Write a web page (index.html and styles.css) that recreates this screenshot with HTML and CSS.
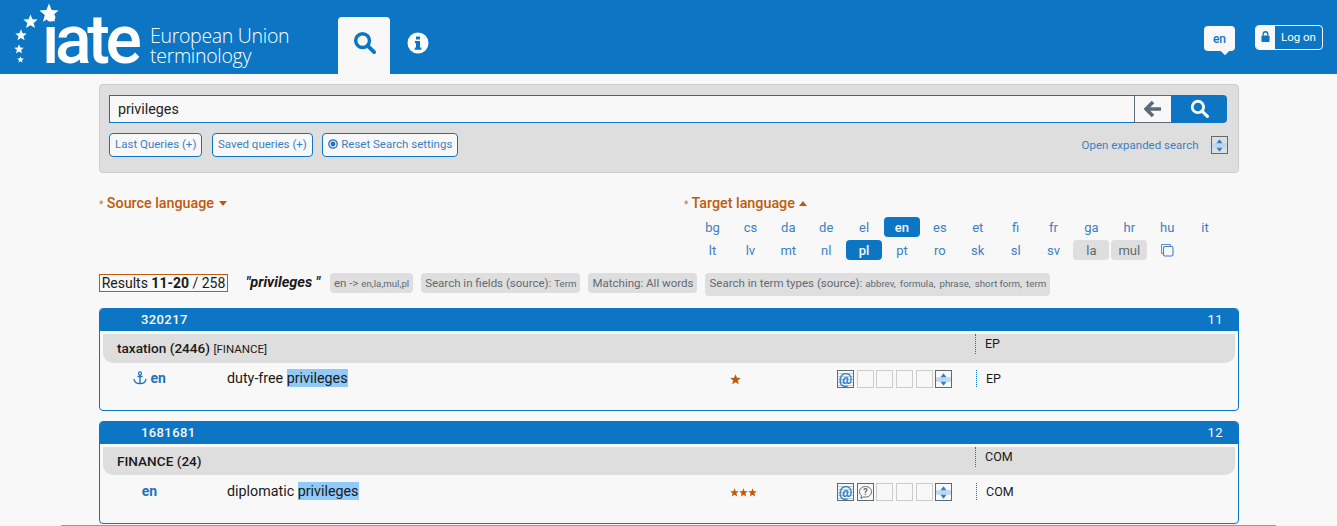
FILE: index.html
```html
<!DOCTYPE html>
<html lang="en">
<head>
    <meta charset="UTF-8">
    <meta name="viewport" content="width=device-width, initial-scale=1.0">
    <title>IATE - European Union terminology</title>
    <link rel="stylesheet" href="styles.css">
</head>
<body>

<svg class="sprites" width="0" height="0">
    <symbol id="i-search" viewBox="0 0 24 24">
        <circle cx="10" cy="10" r="7.2" fill="none" stroke="currentColor" stroke-width="3.6"/>
        <path d="M15.5 15.5 L22 22" fill="none" stroke="currentColor" stroke-width="4" stroke-linecap="round"/>
    </symbol>
    <symbol id="i-star" viewBox="0 0 20 20">
        <path d="M10 0.5 L12.6 7 L19.6 7.4 L14.2 11.9 L16 18.8 L10 15 L4 18.8 L5.8 11.9 L0.4 7.4 L7.4 7 Z" fill="currentColor"/>
    </symbol>
    <symbol id="i-updown" viewBox="0 0 17 17">
        <rect x="0" y="6" width="17" height="5" fill="#bcd7ee"/>
        <path d="M8.5 1.5 L12 6 L5 6 Z M8.5 15.5 L5 11 L12 11 Z" fill="#2a84d2"/>
    </symbol>
</svg>

<header class="topbar">
    <a class="logo" href="#">
        <svg class="logo-stars" width="46" height="66" viewBox="0 0 46 66">
            <use href="#i-star" x="25" y="3" width="20" height="20" color="#fff"/>
            <use href="#i-star" x="9" y="14" width="15" height="15" color="#fff"/>
            <use href="#i-star" x="1" y="29" width="12" height="12" color="#fff"/>
            <use href="#i-star" x="0" y="44" width="10" height="10" color="#fff"/>
            <use href="#i-star" x="3" y="56" width="7" height="7" color="#fff"/>
        </svg>
        <span class="logo-mark">iate</span>
        <span class="logo-text">
            <span class="logo-line">European Union</span>
            <span class="logo-line">terminology</span>
        </span>
    </a>
    <nav class="tabs">
        <a class="tab tab-active" href="#"><svg width="23" height="23"><use href="#i-search"/></svg></a>
        <a class="tab tab-info" href="#">
            <svg width="22" height="22" viewBox="0 0 22 22">
                <circle cx="11" cy="11" r="10.5" fill="#fff"/>
                <path d="M9 4.5h4v3h-4z M8 9h5v6.5h1.400v2.200H7.700v-2.200H9v-4.300H8z" fill="#0c76c5"/>
            </svg>
        </a>
    </nav>
    <div class="top-right">
        <button class="lang-bubble">en</button>
        <button class="login">
            <span class="login-icon">
                <svg width="9" height="11" viewBox="0 0 10 12">
                    <path d="M2.500 5V3.200a2.500 2.500 0 0 1 5 0V5" fill="none" stroke="#0c76c5" stroke-width="1.500"/>
                    <rect x="0.500" y="5" width="9" height="7" rx="1" fill="#0c76c5"/>
                </svg>
            </span>
            <span class="login-text">Log on</span>
        </button>
    </div>
</header>

<main class="page">
    <section class="search-panel">
        <div class="search-row">
            <input class="search-input" type="text" value="privileges">
            <button class="search-back">
                <svg width="18" height="16" viewBox="0 0 18 16">
                    <path d="M9 1 L2 8 L9 15 M3 8 H17" fill="none" stroke="#5c6b75" stroke-width="3.600"/>
                </svg>
            </button>
            <button class="search-go"><svg width="19" height="19"><use href="#i-search"/></svg></button>
        </div>
        <div class="search-tools">
            <button class="tool-btn">Last Queries (+)</button>
            <button class="tool-btn">Saved queries (+)</button>
            <button class="tool-btn">
                <svg width="10" height="10" viewBox="0 0 10 10">
                    <circle cx="5" cy="5" r="4.200" fill="none" stroke="#1f74bd" stroke-width="1.300"/>
                    <circle cx="5" cy="5" r="2.400" fill="#1f74bd"/>
                </svg>
                Reset Search settings
            </button>
            <a class="expand-link" href="#">Open expanded search</a>
            <span class="icon-box icon-box-on expand-box"><svg width="15" height="15"><use href="#i-updown"/></svg></span>
        </div>
    </section>

    <section class="languages">
        <div class="lang-col">
            <h3 class="lang-title"><span class="req">*</span> Source language <span class="caret caret-down"></span></h3>
        </div>
        <div class="lang-col">
            <h3 class="lang-title"><span class="req">*</span> Target language <span class="caret caret-up"></span></h3>
            <div class="lang-grid">
                <a>bg</a><a>cs</a><a>da</a><a>de</a><a>el</a><a class="on">en</a><a>es</a><a>et</a><a>fi</a><a>fr</a><a>ga</a><a>hr</a><a>hu</a><a>it</a>
                <a>lt</a><a>lv</a><a>mt</a><a>nl</a><a class="on">pl</a><a>pt</a><a>ro</a><a>sk</a><a>sl</a><a>sv</a><a class="off">la</a><a class="off">mul</a>
                <a class="copy">
                    <svg width="14" height="14" viewBox="0 0 14 14">
                        <path d="M3 10.500H1.500V1.500H10.500V3" fill="none" stroke="#5a8fca" stroke-width="1"/>
                        <rect x="3.500" y="3.500" width="9.500" height="9.500" rx="1.500" fill="none" stroke="#3f80c8" stroke-width="1.100"/>
                    </svg>
                </a>
            </div>
        </div>
    </section>

    <section class="summary">
        <div class="results-count">Results <b>11-20</b> / 258</div>
        <div class="query">"privileges "</div>
        <span class="chip">en -&gt; <small>en,la,mul,pl</small></span>
        <span class="chip">Search in fields (source): <small>Term</small></span>
        <span class="chip">Matching: All words</span>
        <span class="chip chip-tall">Search in term types (source): <small>abbrev, &nbsp;formula, &nbsp;phrase, &nbsp;short form, &nbsp;term</small></span>
    </section>

    <article class="card">
        <div class="card-head"><span>320217</span><span class="card-num">11</span></div>
        <div class="band">
            <div class="domain"><b>taxation (2446)</b> <small>[FINANCE]</small></div>
            <div class="src src-band">EP</div>
        </div>
        <div class="term-row">
            <div class="term-lang">
                <svg width="14" height="14" viewBox="0 0 14 14">
                    <circle cx="7" cy="2.400" r="1.500" fill="none" stroke="#1f74bd" stroke-width="1.200"/>
                    <path d="M7 4v9 M4.500 5.500h5 M1 8c.3 3 3 4.600 6 4.600s5.700-1.600 6-4.600" fill="none" stroke="#1f74bd" stroke-width="1.400"/>
                </svg>
                en
            </div>
            <div class="term-text">duty-free <mark>privileges</mark></div>
            <div class="stars"><svg width="11" height="11"><use href="#i-star"/></svg></div>
            <div class="icons">
                <span class="icon-box icon-box-on at">@</span>
                <span class="icon-box"></span>
                <span class="icon-box"></span>
                <span class="icon-box"></span>
                <span class="icon-box"></span>
                <span class="icon-box icon-box-on"><svg width="15" height="15"><use href="#i-updown"/></svg></span>
            </div>
            <div class="src src-row">EP</div>
        </div>
    </article>

    <article class="card">
        <div class="card-head"><span>1681681</span><span class="card-num">12</span></div>
        <div class="band band-short">
            <div class="domain"><b>FINANCE (24)</b></div>
            <div class="src src-band">COM</div>
        </div>
        <div class="term-row">
            <div class="term-lang">en</div>
            <div class="term-text">diplomatic <mark>privileges</mark></div>
            <div class="stars">
                <svg width="9" height="11"><use href="#i-star"/></svg><svg width="9" height="11"><use href="#i-star"/></svg><svg width="9" height="11"><use href="#i-star"/></svg>
            </div>
            <div class="icons">
                <span class="icon-box icon-box-on at">@</span>
                <span class="icon-box icon-box-on">
                    <svg width="15" height="15" viewBox="0 0 15 15">
                        <path d="M7.500 1.500c3.500 0 6 2.300 6 5.300s-2.500 5.300-6 5.300c-.7 0-1.300-.1-1.900-.3L3 13.500l.4-3C2.200 9.500 1.500 8.200 1.500 6.800c0-3 2.500-5.300 6-5.300z" fill="none" stroke="#5c6b75" stroke-width="1"/>
                        <text x="7.500" y="10" text-anchor="middle" class="q-mark">?</text>
                    </svg>
                </span>
                <span class="icon-box"></span>
                <span class="icon-box"></span>
                <span class="icon-box"></span>
                <span class="icon-box icon-box-on"><svg width="15" height="15"><use href="#i-updown"/></svg></span>
            </div>
            <div class="src src-row">COM</div>
        </div>
    </article>

    <div class="next-rule"></div>
</main>

</body>
</html>
```

FILE: styles.css
```css
* {
    box-sizing: border-box;
}

html,
body {
    height: 526px;
    overflow: hidden;
}

body {
    margin: 0;
    background: #f8f8f8;
    color: #1a1a1a;
    font-family: Roboto, "Liberation Sans", sans-serif;
    font-size: 13px;
}

a {
    text-decoration: none;
}

button {
    font-family: inherit;
    cursor: pointer;
}

.sprites {
    position: absolute;
}

/* top bar */
.topbar {
    height: 74px;
    background: #0c76c5;
    display: flex;
    color: #fff;
}

.logo {
    width: 338px;
    display: flex;
    padding-left: 14px;
    color: #fff;
}

.logo-stars {
    flex: none;
    margin-right: -18px;
    position: relative;
    z-index: 1;
}

.logo-mark {
    width: 97px;
    font-family: Roboto, sans-serif;
    font-size: 68px;
    font-weight: 500;
    line-height: 80px;
    letter-spacing: -4.4px;
    white-space: nowrap;
}

.logo-text {
    margin-top: 26px;
    margin-left: 11px;
    font-family: "Open Sans", sans-serif;
    font-size: 19.5px;
    font-weight: 300;
    white-space: nowrap;
    letter-spacing: -0.3px;
}

.logo-line {
    display: block;
    height: 20px;
    line-height: 20px;
}

.tabs {
    display: flex;
    margin-top: 17px;
}

.tab {
    width: 52px;
    height: 57px;
    display: flex;
    align-items: center;
    justify-content: center;
    padding-bottom: 6px;
}

.tab-info {
    padding-left: 4px;
}

.tab-active {
    background: #f8f8f8;
    color: #0c76c5;
    border-radius: 4px 4px 0 0;
}

.top-right {
    margin-left: auto;
    display: flex;
    align-items: flex-start;
    padding: 25px 14px 0 0;
}

.lang-bubble {
    position: relative;
    width: 31px;
    height: 25px;
    margin-top: 1px;
    margin-right: 20px;
    padding: 0;
    border: 0;
    border-radius: 4px;
    background: #f8f8f8;
    color: #0c76c5;
    font-size: 12px;
    font-weight: 500;
}

.lang-bubble::after {
    content: "";
    position: absolute;
    left: 18px;
    bottom: -3px;
    width: 6px;
    height: 6px;
    background: #f8f8f8;
    transform: rotate(45deg);
}

.login {
    display: flex;
    width: 68px;
    height: 25px;
    padding: 0;
    border: 1px solid #f8f8f8;
    border-radius: 4px;
    background: transparent;
    color: #fff;
    font-size: 11.5px;
    overflow: hidden;
}

.login-icon {
    width: 19px;
    height: 100%;
    display: flex;
    align-items: center;
    justify-content: center;
    padding-bottom: 2px;
    background: #f8f8f8;
}

.login-text {
    flex: 1;
    line-height: 22px;
}

/* page */
.page {
    width: 1140px;
    margin: 10px 0 0 99px;
}

.search-panel {
    height: 89px;
    padding: 10px 11px 0 9px;
    background: #dedede;
    border: 1px solid #ccc;
    border-radius: 4px;
}

.search-row {
    display: flex;
    height: 28px;
}

.search-input {
    flex: 1;
    min-width: 0;
    padding: 0 8px;
    border: 1px solid #0c76c5;
    border-right: 0;
    background: #f8f8f8;
    font-family: inherit;
    font-size: 14.3px;
    color: #222;
    outline: none;
}

.search-back {
    width: 37px;
    padding: 2px 0 0;
    border: 1px solid #5c6b75;
    border-width: 1px 0 1px 1px;
    background: #f8f8f8;
}

.search-go {
    width: 56px;
    padding: 2px 0 0;
    border: 0;
    border-radius: 0 4px 4px 0;
    background: #0c76c5;
    color: #f8f8f8;
}

.search-tools {
    display: flex;
    align-items: center;
    gap: 9.5px;
    margin-top: 10px;
}

.tool-btn {
    height: 24px;
    padding: 0 5px 2px;
    border: 1px solid #0c76c5;
    border-radius: 4px;
    background: #f8f8f8;
    color: #3b80c4;
    font-size: 11.5px;
    white-space: nowrap;
}

.tool-btn svg {
    vertical-align: -1px;
}

.expand-link {
    margin-left: auto;
    margin-right: 3px;
    color: #3b80c4;
    font-size: 11.5px;
}

.icon-box {
    width: 17px;
    height: 18px;
    display: inline-flex;
    align-items: center;
    justify-content: center;
    border: 1px solid #ccc;
    flex: none;
}

.icon-box-on {
    border-color: #5c6b75;
}

.expand-box {
    margin-right: -1px;
}

.at {
    color: #2a84d2;
    font-size: 15px;
    font-weight: 700;
    line-height: 1;
    background: repeating-linear-gradient(to bottom, #f8f8f8 0, #f8f8f8 2px, #c5ccd2 2px, #c5ccd2 3px);
}

/* languages */
.languages {
    display: flex;
    margin-top: 22px;
    height: 72px;
}

.lang-col {
    flex: none;
    width: 584px;
}

.lang-title {
    margin: 0;
    color: #c05a0a;
    font-size: 14.3px;
    font-weight: 500;
    line-height: 16px;
}

.lang-col + .lang-col .lang-title {
    padding-left: 1px;
}

.req {
    font-size: 10px;
    font-weight: 400;
    color: #b7794a;
}

.caret {
    display: inline-block;
    margin-left: 1px;
    vertical-align: 2px;
    border-left: 4.5px solid transparent;
    border-right: 4.5px solid transparent;
}

.caret-down {
    border-top: 5px solid #c05a0a;
}

.caret-up {
    border-bottom: 5px solid #c05a0a;
}

.lang-grid {
    display: grid;
    grid-template-columns: repeat(14, 36px);
    grid-auto-rows: 20px;
    gap: 3px 1.9px;
    margin: 4px 0 0 11.5px;
}

.lang-grid a {
    display: flex;
    align-items: center;
    justify-content: center;
    border-radius: 4px;
    color: #3b80c4;
    font-size: 13px;
}

.lang-grid a.on {
    background: #0c76c5;
    color: #f8f8f8;
    font-weight: 500;
}

.lang-grid a.off {
    background: #dedede;
    color: #5f6b73;
}

/* summary row */
.summary {
    display: flex;
    align-items: flex-start;
    margin-top: 7px;
    height: 34px;
}

.results-count {
    height: 18px;
    padding: 0 1px;
    width: 129px;
    text-align: center;
    border: 1px solid #c05a0a;
    font-size: 14px;
    line-height: 16px;
    white-space: nowrap;
}

.results-count b {
    font-weight: 700;
}

.query {
    width: 84px;
    margin-left: 18px;
    font-size: 14.5px;
    font-weight: 700;
    font-style: italic;
    line-height: 18px;
}

.chip {
    height: 20px;
    margin-top: -1px;
    margin-left: 8px;
    padding: 0 4px;
    background: #dedede;
    border-radius: 4px;
    color: #5f6b73;
    font-size: 11.5px;
    line-height: 20px;
    white-space: nowrap;
}

.chip small {
    font-size: 9.7px;
}

.query + .chip {
    margin-left: 0;
}

.chip-tall {
    height: 23px;
}

.chip-tall small {
    word-spacing: -0.35px;
}

/* result cards */
.card {
    height: 103px;
    margin-bottom: 10px;
    border: 1px solid #0c76c5;
    border-radius: 4px;
    overflow: hidden;
}

.card + .card {
    margin-bottom: 1px;
}

.card-head {
    height: 22px;
    display: flex;
    justify-content: space-between;
    padding: 0 15px 0 41px;
    background: #0c76c5;
    color: #f8f8f8;
    font-size: 13px;
    font-weight: 500;
    line-height: 22px;
    letter-spacing: 0.4px;
}

.card-num {
    font-weight: 400;
}

.band {
    height: 29px;
    display: flex;
    margin: 3px 3px 0;
    background: #dedede;
    border-radius: 0 0 10px 10px;
}

.band-short {
    height: 28px;
}

.domain {
    width: 872px;
    padding-left: 14px;
    font-size: 13.6px;
    line-height: 28px;
}

.domain b {
    font-weight: 500;
}

.domain small {
    font-size: 11.5px;
}

.src {
    height: 18px;
    padding-left: 9px;
    border-left: 1px dotted #0c76c5;
    font-size: 12.5px;
    line-height: 18px;
}

.src-band {
    height: 20px;
    line-height: 20px;
}

.src-row {
    margin-top: 1px;
    height: 17px;
}

.term-row {
    display: flex;
    align-items: flex-start;
    margin-top: 6px;
}

.band-short + .term-row {
    margin-top: 7px;
}

.term-lang {
    width: 99px;
    margin-right: 1px;
    color: #1f74bd;
    font-size: 14px;
    font-weight: 700;
    line-height: 18px;
    text-align: center;
}

.term-lang svg {
    vertical-align: -2px;
}

.term-text {
    width: 503px;
    margin-left: 27px;
    font-size: 14.3px;
    line-height: 18px;
}

mark {
    display: inline-block;
    background: #90caf9;
    color: inherit;
}

.stars {
    width: 107px;
    height: 18px;
    margin-top: 1px;
    display: flex;
    align-items: center;
    color: #c05a0a;
}

.icons {
    width: 139px;
    margin-top: 1px;
    display: flex;
    gap: 2.7px;
}

.q-mark {
    font-size: 9px;
    font-weight: 700;
    fill: #5c6b75;
}

.next-rule {
    width: 1215px;
    margin-left: -38px;
    border-top: 1px solid #999;
}
```
